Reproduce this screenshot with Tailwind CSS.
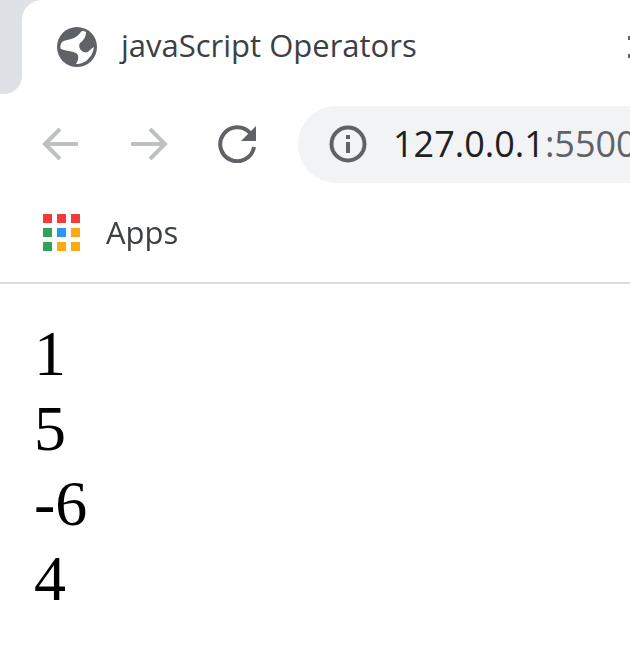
<!DOCTYPE html>
<html lang="en">
<head>
    <meta charset="UTF-8">
    <title>javaScript Operators</title>
    <script src="https://cdn.jsdelivr.net/npm/@tailwindcss/browser@4"></script>
</head>
<body class="bg-white overflow-hidden w-[630px] h-[656px]">
<div class="blur-[0.4px]">
    <!-- tab strip -->
    <div class="flex h-[94px] font-['Open_Sans',sans-serif] text-[#3c4043]">
        <div class="w-[22px] bg-[#dee1e6] rounded-br-[18px]"></div>
        <div class="relative flex-1">
            <div class="absolute top-0 left-0 w-5 h-5 bg-[#dee1e6]"></div>
            <div class="relative h-full bg-white rounded-tl-[20px] flex items-center pl-[35px]">
                <svg class="w-10 h-10 shrink-0 -mt-[1px]" viewBox="0 0 40 40">
                    <circle cx="20" cy="20" r="20" fill="#5f6368"/>
                    <path d="M25 4C22 7 21 9 17 11 12 13 8 13 5 15 3 18 3 21 4 22 9 24 15 24 19 26 22 28 22 32 19 37 24 37 29 35 32 31 35 28 36 25 37 20 33 22 31 27 27 25 23 24 21 19 23 16 26 14 29 10 29 5 28 4 26 4 25 4z" fill="#fff"/>
                </svg>
                <span class="ml-[24px] -mt-[4px] text-[31px] leading-none">javaScript Operators</span>
                <svg class="ml-auto w-[2px] h-[22px] shrink-0 -mt-[1px]" viewBox="0 0 2 22" fill="#5f6368">
                    <path d="M0 0h2v4H0zM0 18h2v4H0z"/>
                </svg>
            </div>
        </div>
    </div>

    <!-- toolbar -->
    <div class="flex items-center h-[98px] pt-[2px] pl-[42px]">
        <svg class="w-[38px] h-[36px] shrink-0" viewBox="0 0 38 36" fill="none" stroke="#bdc1c6" stroke-width="4">
            <path d="M36 18H3M18 3 3 18l15 15"/>
        </svg>
        <svg class="w-[38px] h-[36px] shrink-0 ml-[50px]" viewBox="0 0 38 36" fill="none" stroke="#bdc1c6" stroke-width="4">
            <path d="M1 18h33M20 3l15 15-15 15"/>
        </svg>
        <svg class="w-[40px] h-[38px] shrink-0 ml-[50px]" viewBox="0 0 40 38" fill="none">
            <path d="M32 8A17 17 0 1 0 36 22" stroke="#5f6368" stroke-width="4"/>
            <path d="M38 1v15H23z" fill="#5f6368"/>
        </svg>
        <div class="ml-[40px] flex-1 h-[77px] bg-[#f1f3f4] rounded-l-[38px] flex items-center pl-[31px] overflow-hidden">
            <svg class="w-[38px] h-[38px] shrink-0" viewBox="0 0 38 38" fill="none">
                <circle cx="19" cy="19" r="16.5" stroke="#5f6368" stroke-width="4"/>
                <path d="M17 10h4v4h-4zM17 17h4v11h-4z" fill="#5f6368"/>
            </svg>
            <span class="ml-[26px] text-[36px] leading-none font-['Open_Sans',sans-serif] whitespace-nowrap text-[#202124]">127.0.0.1<span class="text-[#5f6368]">:5500</span></span>
        </div>
    </div>

    <!-- bookmarks bar -->
    <div class="flex items-center h-[92px] pb-[9px] pl-[43px] border-b-2 border-[#dadce0] font-['Open_Sans',sans-serif]">
        <div class="grid grid-cols-3 gap-[5px] w-[37px] shrink-0">
            <div class="h-[9px] bg-[#f43a3a]"></div>
            <div class="h-[9px] bg-[#f43a3a]"></div>
            <div class="h-[9px] bg-[#f43a3a]"></div>
            <div class="h-[9px] bg-[#2fa35a]"></div>
            <div class="h-[9px] bg-[#2a96f5]"></div>
            <div class="h-[9px] bg-[#fdaa10]"></div>
            <div class="h-[9px] bg-[#2fa35a]"></div>
            <div class="h-[9px] bg-[#fdaa10]"></div>
            <div class="h-[9px] bg-[#fdaa10]"></div>
        </div>
        <span class="ml-[26px] text-[31px] leading-none text-[#3c4043]">Apps</span>
    </div>

    <!-- page body -->
    <div class="pt-[32px] pl-[34px] font-['Liberation_Serif',serif] text-[64px] leading-[75px] text-black">
        <div>1</div>
        <div>5</div>
        <div>-6</div>
        <div>4</div>
    </div>
</div>
</body>
</html>
